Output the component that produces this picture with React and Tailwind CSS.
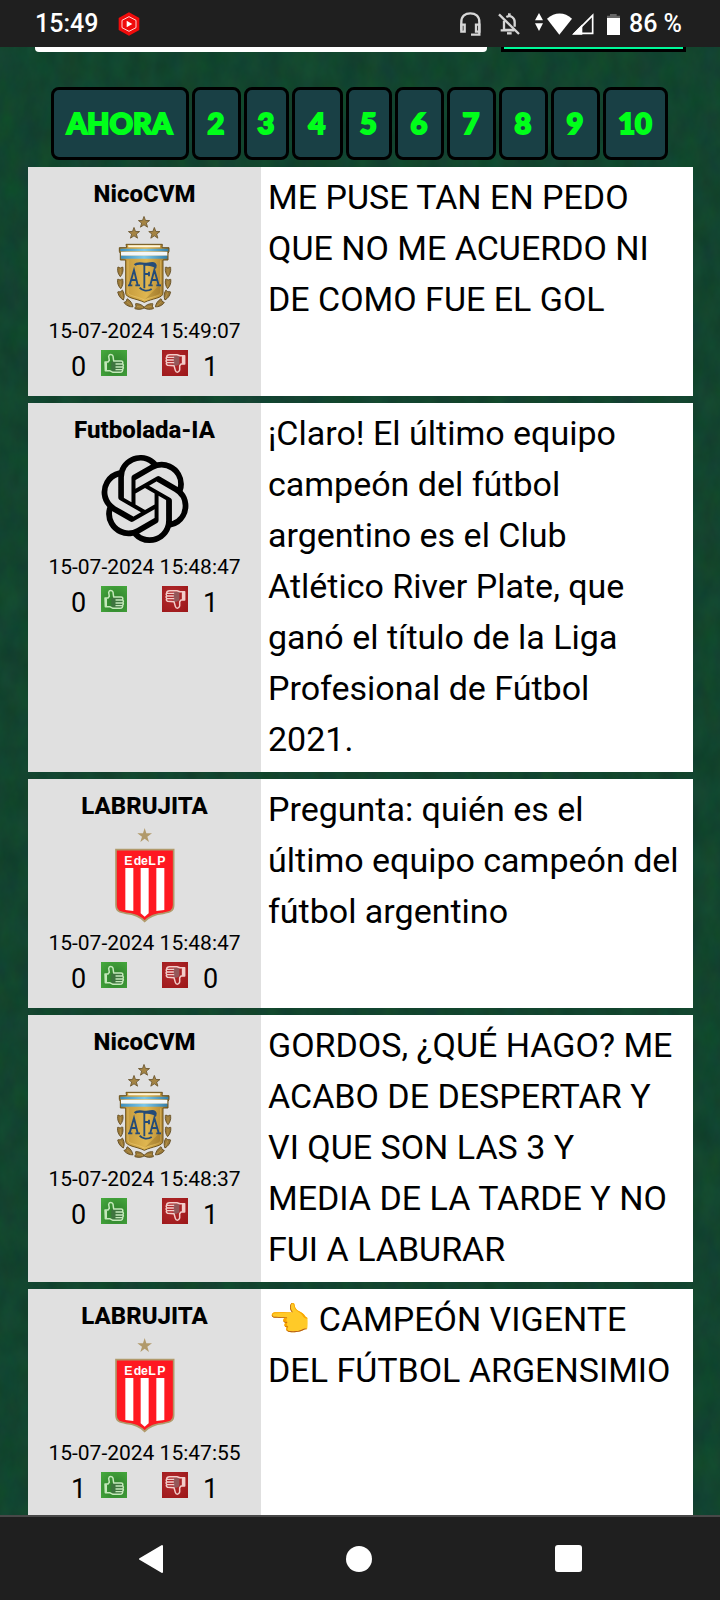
import React from "react";

const pages = [
  { label: "AHORA", width: "w-[138px]" },
  { label: "2", width: "w-[49px]" },
  { label: "3", width: "w-[45px]" },
  { label: "4", width: "w-[51px]" },
  { label: "5", width: "w-[46px]" },
  { label: "6", width: "w-[49px]" },
  { label: "7", width: "w-[49px]" },
  { label: "8", width: "w-[49px]" },
  { label: "9", width: "w-[49px]" },
  { label: "10", width: "w-[65px]" },
];

const posts = [
  { user: "NicoCVM", crest: "afa", date: "15-07-2024 15:49:07", up: 0, down: 1, text: "ME PUSE TAN EN PEDO QUE NO ME ACUERDO NI DE COMO FUE EL GOL" },
  { user: "Futbolada-IA", crest: "ai", date: "15-07-2024 15:48:47", up: 0, down: 1, text: "¡Claro! El último equipo campeón del fútbol argentino es el Club Atlético River Plate, que ganó el título de la Liga Profesional de Fútbol 2021." },
  { user: "LABRUJITA", crest: "edlp", date: "15-07-2024 15:48:47", up: 0, down: 0, text: "Pregunta: quién es el último equipo campeón del fútbol argentino" },
  { user: "NicoCVM", crest: "afa", date: "15-07-2024 15:48:37", up: 0, down: 1, text: "GORDOS, ¿QUÉ HAGO? ME ACABO DE DESPERTAR Y VI QUE SON LAS 3 Y MEDIA DE LA TARDE Y NO FUI A LABURAR" },
  { user: "LABRUJITA", crest: "edlp", date: "15-07-2024 15:47:55", up: 1, down: 1, text: "👈 CAMPEÓN VIGENTE DEL FÚTBOL ARGENSIMIO" },
];

const STAR = "M0 -20 L5 -6.5 19 -6 8 2.5 12 16.5 0 8.5 -12 16.5 -8 2.5 -19 -6 -5 -6.5Z";

function AfaCrest() {
  const leaves = [
    [302, 333, 0], [302, 369, -4], [305, 404, -20], [326, 430, -50], [357, 441, -80],
    [445, 333, 0], [445, 369, 4], [442, 404, 20], [421, 430, 50], [390, 441, 80],
  ];
  return (
    <svg viewBox="286 163 180 294" className="h-[98px] w-[60px]" role="img" aria-label="AFA">
      <defs>
        <linearGradient id="afaGold" x1="0" y1="0" x2="1" y2="0">
          <stop offset="0" stopColor="#8a6a22" />
          <stop offset="0.15" stopColor="#c79c3e" />
          <stop offset="0.55" stopColor="#dfb650" />
          <stop offset="0.85" stopColor="#b98d35" />
          <stop offset="1" stopColor="#735518" />
        </linearGradient>
        <linearGradient id="afaBand" x1="0" y1="0" x2="1" y2="0">
          <stop offset="0" stopColor="#3d8fbd" />
          <stop offset="0.5" stopColor="#7cc8ea" />
          <stop offset="1" stopColor="#347fa9" />
        </linearGradient>
      </defs>
      {[[373, 188], [343, 221], [404, 221]].map(([x, y]) => (
        <path key={x} d={STAR} transform={"translate(" + x + " " + y + ") scale(.88)"} fill="#a58443" stroke="#6b5730" strokeWidth="3" />
      ))}
      {leaves.map(([x, y, r]) => (
        <g key={x + "-" + y} transform={"translate(" + x + " " + y + ") rotate(" + r + ")"}>
          <path d="M0 -8 C3 -9 9 -14 8 -7 C9 1 7 10 0 18 C-7 10 -9 1 -8 -7 C-9 -14 -3 -9 0 -8Z" fill="#9b7a38" stroke="#5f4920" strokeWidth="2.5" />
          <path d="M0 -6V14" stroke="#c9a65c" strokeWidth="1.5" />
        </g>
      ))}
      <path d="M319 254H428L427 264H448V275L445 282V301H430V400C430 416 398 416 374 428C350 416 318 416 318 400V301H302V282L299 275V264H321Z" fill="url(#afaGold)" stroke="#6d531f" strokeWidth="3" />
      <path d="M325 257H422L421 263H326Z" fill="#fff6dd" />
      <path d="M302 267H446V275H302Z" fill="url(#afaBand)" />
      <path d="M304 276H443V288H304Z" fill="#f4f7f9" />
      <path d="M304 288H443V297H304Z" fill="url(#afaBand)" />
      <path d="M325 302V398C326 410 352 409 374 421C396 409 422 410 423 398V302" fill="none" stroke="#f0d27e" strokeWidth="2" opacity=".7" />
      <path d="M374 421L426 370V398C426 410 396 408 374 421Z" fill="#7d5d1e" opacity=".3" />
      <g fill="none" stroke="#244b78" strokeWidth="5.5">
        <path d="M345 316C355 305 374 317 392 311C404 308 410 314 407 322C398 314 385 316 372 314" strokeWidth="7" />
        <path d="M374 316V386M360 384C368 394 384 396 396 388M374 343H388M388 336V350" />
        <path d="M330 376L343 331L354 376M335 361H351M325 377H338M347 377H361M392 376L404 331L417 376M397 361H412M386 377H399M410 377H424" />
      </g>
    </svg>
  );
}

function AiLogo() {
  return (
    <svg viewBox="0 0 24 24" className="size-[88px]" role="img" aria-label="IA">
      <path d="M22.2819 9.8211a5.9847 5.9847 0 0 0-.5157-4.9108 6.0462 6.0462 0 0 0-6.5098-2.9A6.0651 6.0651 0 0 0 4.9807 4.1818a5.9847 5.9847 0 0 0-3.9977 2.9 6.0462 6.0462 0 0 0 .7427 7.0966 5.98 5.98 0 0 0 .511 4.9107 6.051 6.051 0 0 0 6.5146 2.9001A5.9847 5.9847 0 0 0 13.2599 24a6.0557 6.0557 0 0 0 5.7718-4.2058 5.9894 5.9894 0 0 0 3.9977-2.9001 6.0557 6.0557 0 0 0-.7475-7.0729zm-9.022 12.6081a4.4755 4.4755 0 0 1-2.8764-1.0408l.1419-.0804 4.7783-2.7582a.7948.7948 0 0 0 .3927-.6813v-6.7369l2.02 1.1686a.071.071 0 0 1 .038.052v5.5826a4.504 4.504 0 0 1-4.4945 4.4944zm-9.6607-4.1254a4.4708 4.4708 0 0 1-.5346-3.0137l.142.0852 4.783 2.7582a.7712.7712 0 0 0 .7806 0l5.8428-3.3685v2.3324a.0804.0804 0 0 1-.0332.0615L9.74 19.9502a4.4992 4.4992 0 0 1-6.1408-1.6464zM2.3408 7.8956a4.485 4.485 0 0 1 2.3655-1.9728V11.6a.7664.7664 0 0 0 .3879.6765l5.8144 3.3543-2.0201 1.1685a.0757.0757 0 0 1-.071 0l-4.8303-2.7865A4.504 4.504 0 0 1 2.3408 7.872zm16.5963 3.8558L13.1038 8.364 15.1192 7.2a.0757.0757 0 0 1 .071 0l4.8303 2.7913a4.4944 4.4944 0 0 1-.6765 8.1042v-5.6772a.79.79 0 0 0-.407-.667zm2.0107-3.0231l-.142-.0852-4.7735-2.7818a.7759.7759 0 0 0-.7854 0L9.409 9.2297V6.8974a.0662.0662 0 0 1 .0284-.0615l4.8303-2.7866a4.4992 4.4992 0 0 1 6.6802 4.66zM8.3065 12.863l-2.02-1.1638a.0804.0804 0 0 1-.038-.0567V6.0742a4.4992 4.4992 0 0 1 7.3757-3.4537l-.142.0805L8.704 5.459a.7948.7948 0 0 0-.3927.6813zm1.0976-2.3654l2.602-1.4998 2.6069 1.4998v2.9994l-2.5974 1.4997-2.6067-1.4997Z" />
    </svg>
  );
}

function EdlpCrest() {
  return (
    <svg viewBox="281 168 186 294" className="h-[98px] w-[62px]" role="img" aria-label="Estudiantes de La Plata">
      <path d="M373 174L378 190H395L381 200L386 216L373 206L360 216L365 200L351 190H368Z" fill="#b19a6b" />
      <path d="M287 239H460V405C460 424 448 427 428 430C404 432 387 439 373 454C359 439 342 432 318 430C298 427 287 424 287 405Z" fill="#ff1821" stroke="#b19a6b" strokeWidth="5" />
      <path d="M315 294H339V423L315 420ZM361 294H385V430L373 440L361 430ZM408 294H432V420L408 423Z" fill="#fff" />
      <text x="312 340 362 384 411" y="284" fill="#fff" fontFamily="'Liberation Sans', sans-serif" fontWeight="700" fontSize="37">EdeLP</text>
    </svg>
  );
}

const crests = { afa: AfaCrest, ai: AiLogo, edlp: EdlpCrest };

function ThumbUp() {
  return (
    <svg viewBox="0 0 78 78" className="block size-[26px]" aria-hidden="true">
      <defs>
        <radialGradient id="upFill" cx=".55" cy=".6" r=".75">
          <stop offset="0" stopColor="#2c7a2b" />
          <stop offset="1" stopColor="#45a83c" />
        </radialGradient>
      </defs>
      <path d="M0 0H78V78H0Z" fill="url(#upFill)" />
      <path d="M31 35L41 33H64L67 65H38L31 62Z" fill="#3f7540" />
      <g fill="none" stroke="#c4e8ba" strokeWidth="4.5" strokeLinejoin="round" strokeLinecap="round">
        <path d="M12 36H21L25 31L23 19C25 11 33 12 36 18L38 33H60Q67 33 65 41Q69 45 66 50Q69 54 65 58Q66 66 57 67H36L26 62H13Z" />
        <path d="M45 42H64M45 51H65M45 59H64" strokeWidth="4" />
        <path d="M15 39V59" strokeWidth="6" />
      </g>
    </svg>
  );
}

function ThumbDown() {
  return (
    <svg viewBox="0 0 78 78" className="block size-[26px]" aria-hidden="true">
      <defs>
        <radialGradient id="downFill" cx=".4" cy=".4" r=".8">
          <stop offset="0" stopColor="#b32b2e" />
          <stop offset="1" stopColor="#9c1719" />
        </radialGradient>
      </defs>
      <path d="M0 0H78V78H0Z" fill="url(#downFill)" />
      <path d="M34 17L52 18V43L44 47H34Z" fill="#94585a" />
      <g fill="none" stroke="#f3cdca" strokeWidth="4.5" strokeLinejoin="round" strokeLinecap="round">
        <path d="M68 42H57L53 47V60C50 69 42 68 40 61L36 47L17 46Q11 43 14 37Q10 33 14 29Q11 25 14 21Q14 14 23 14H45L54 17H68Z" />
        <path d="M15 22H35M15 30H34M15 38H35" strokeWidth="4" />
        <path d="M63 20V39" strokeWidth="7" />
      </g>
    </svg>
  );
}

function StatusBar() {
  return (
    <header className="flex h-[47px] shrink-0 items-center bg-[#1f1f1f] pt-px pr-[38px] pl-[35px] text-[25px] font-medium text-white">
      <span>15:49</span>
      <svg viewBox="0 0 66 72" className="ml-5 h-6 w-[22px]" aria-hidden="true">
        <path d="M33 1L64 18V54L33 71L2 54V18Z" fill="#f00b0b" />
        <path d="M33 14L54 25V47L33 58L12 47V25Z" fill="none" stroke="#fff" strokeWidth="2.5" />
        <path d="M26 26L43 36L26 46Z" fill="#fff" />
      </svg>
      <svg viewBox="0 0 63 72" className="ml-auto h-6 w-[21px]" fill="none" stroke="#d6d6d6" strokeWidth="7" aria-hidden="true">
        <path d="M4 55V30C4 12 16 4 31 4S58 12 58 30V68H33" />
        <path d="M4 38H14V59H4ZM48 38H58V59H48Z" />
      </svg>
      <svg viewBox="0 0 66 66" className="ml-[17px] size-[22px]" fill="none" stroke="#d6d6d6" strokeWidth="7" aria-hidden="true">
        <path d="M3 4L63 63" />
        <path d="M18 23V51H50M8 52H48M25 12C39 5 50 15 50 27V41" />
        <path d="M34 1V8" strokeWidth="8" />
        <path d="M27 61H41" strokeWidth="7" />
      </svg>
      <svg viewBox="0 0 24 66" className="ml-[15px] h-[22px] w-2" fill="#fff" aria-hidden="true">
        <path d="M12 0L24 22H0ZM0 31H24L12 54Z" />
      </svg>
      <svg viewBox="0 0 75 66" className="ml-1 h-[22px] w-[25px]" fill="#fff" aria-hidden="true">
        <path d="M37 65L0 17C23 -4 53 -4 75 17Z" />
      </svg>
      <svg viewBox="0 0 66 66" className="h-[22px] w-[22px]" aria-hidden="true">
        <path d="M8 61L62 7V61Z" fill="none" stroke="#fff" strokeWidth="5" />
        <path d="M0 65L31 34V65Z" fill="#fff" />
      </svg>
      <svg viewBox="0 0 39 63" className="ml-[13px] h-[21px] w-[13px]" aria-hidden="true">
        <path d="M9 0H29V5H39V14H0V5H9Z" fill="#666" />
        <path d="M0 12H39V63H0Z" fill="#fff" />
      </svg>
      <span className="ml-[9px]">86 %</span>
    </header>
  );
}

function Post({ post }) {
  const Crest = crests[post.crest];
  return (
    <article className="flex min-h-[229px] bg-white">
      <div className="flex w-[233px] shrink-0 flex-col items-center bg-[#e0e0e0] pt-[9px]">
        <h2 className="text-2xl leading-9 font-extrabold">{post.user}</h2>
        <div className="mt-0.5 flex h-[98px] items-center justify-center">
          <Crest />
        </div>
        <time className="text-[21px] leading-[38px]">{post.date}</time>
        <div className="flex items-baseline gap-[15px] text-[27px] leading-7">
          <span className="w-[15px] text-center">{post.up}</span>
          <button type="button" aria-label="Me gusta" className="mr-5">
            <ThumbUp />
          </button>
          <button type="button" aria-label="No me gusta">
            <ThumbDown />
          </button>
          <span className="w-[15px] text-center">{post.down}</span>
        </div>
      </div>
      <p className="min-w-0 flex-1 pt-[5px] pr-3 pb-[7px] pl-[7px] text-[34px] leading-[51px]">{post.text}</p>
    </article>
  );
}

export default function App() {
  return (
    <div className="flex h-screen flex-col bg-[#0f462e] font-['Roboto','Noto_Color_Emoji',sans-serif] text-black">
      <StatusBar />
      <main className="relative isolate min-h-0 flex-1 overflow-hidden">
        <svg className="absolute inset-0 -z-10 h-full w-full opacity-15" aria-hidden="true">
          <filter id="felt" colorInterpolationFilters="sRGB">
            <feTurbulence type="fractalNoise" baseFrequency=".05 .03" numOctaves="4" seed="4" />
            <feColorMatrix values=".3 0 0 0 0  0 .5 0 0 0  0 0 .4 0 0  0 0 0 0 1" />
          </filter>
          <rect width="100%" height="100%" filter="url(#felt)" />
        </svg>
        <form className="flex h-[5px] items-end gap-[14px] overflow-hidden pr-[34px] pl-[35px]">
          <input aria-label="Mensaje" className="h-16 min-w-0 flex-1 rounded bg-white px-3" />
          <button type="button" aria-label="Enviar" className="h-16 w-[185px] shrink-0 border-3 border-black bg-[#00fa9a]" />
        </form>
        <nav aria-label="Páginas" className="mt-[35px] flex justify-center gap-[3px] pr-0.5">
          {pages.map((p) => (
            <a key={p.label} href="#" className={"flex h-[73px] items-center justify-center rounded-lg border-3 border-black bg-[#194045] pb-0.5 font-['Lato',sans-serif] text-[29px] font-black text-[#00ff1a] [-webkit-text-stroke:2px_#00ff1a] " + p.width}>
              {p.label}
            </a>
          ))}
        </nav>
        <section className="mt-[7px] mr-[27px] ml-7 flex flex-col gap-[7px]">
          {posts.map((post, i) => (
            <Post key={i} post={post} />
          ))}
        </section>
      </main>
      <footer className="flex h-[85px] shrink-0 items-center justify-around border-t-2 border-[#484848] bg-[#1f1f1f] px-[47px]">
        <button type="button" aria-label="Atrás">
          <svg viewBox="0 0 26 30" className="h-[30px] w-[26px]" fill="#fff" stroke="#fff" strokeWidth="2" strokeLinejoin="round">
            <path d="M24 2V28L2 15Z" />
          </svg>
        </button>
        <button type="button" aria-label="Inicio" className="size-[26px] rounded-full bg-white" />
        <button type="button" aria-label="Recientes" className="size-[27px] rounded-[3px] bg-white" />
      </footer>
    </div>
  );
}
